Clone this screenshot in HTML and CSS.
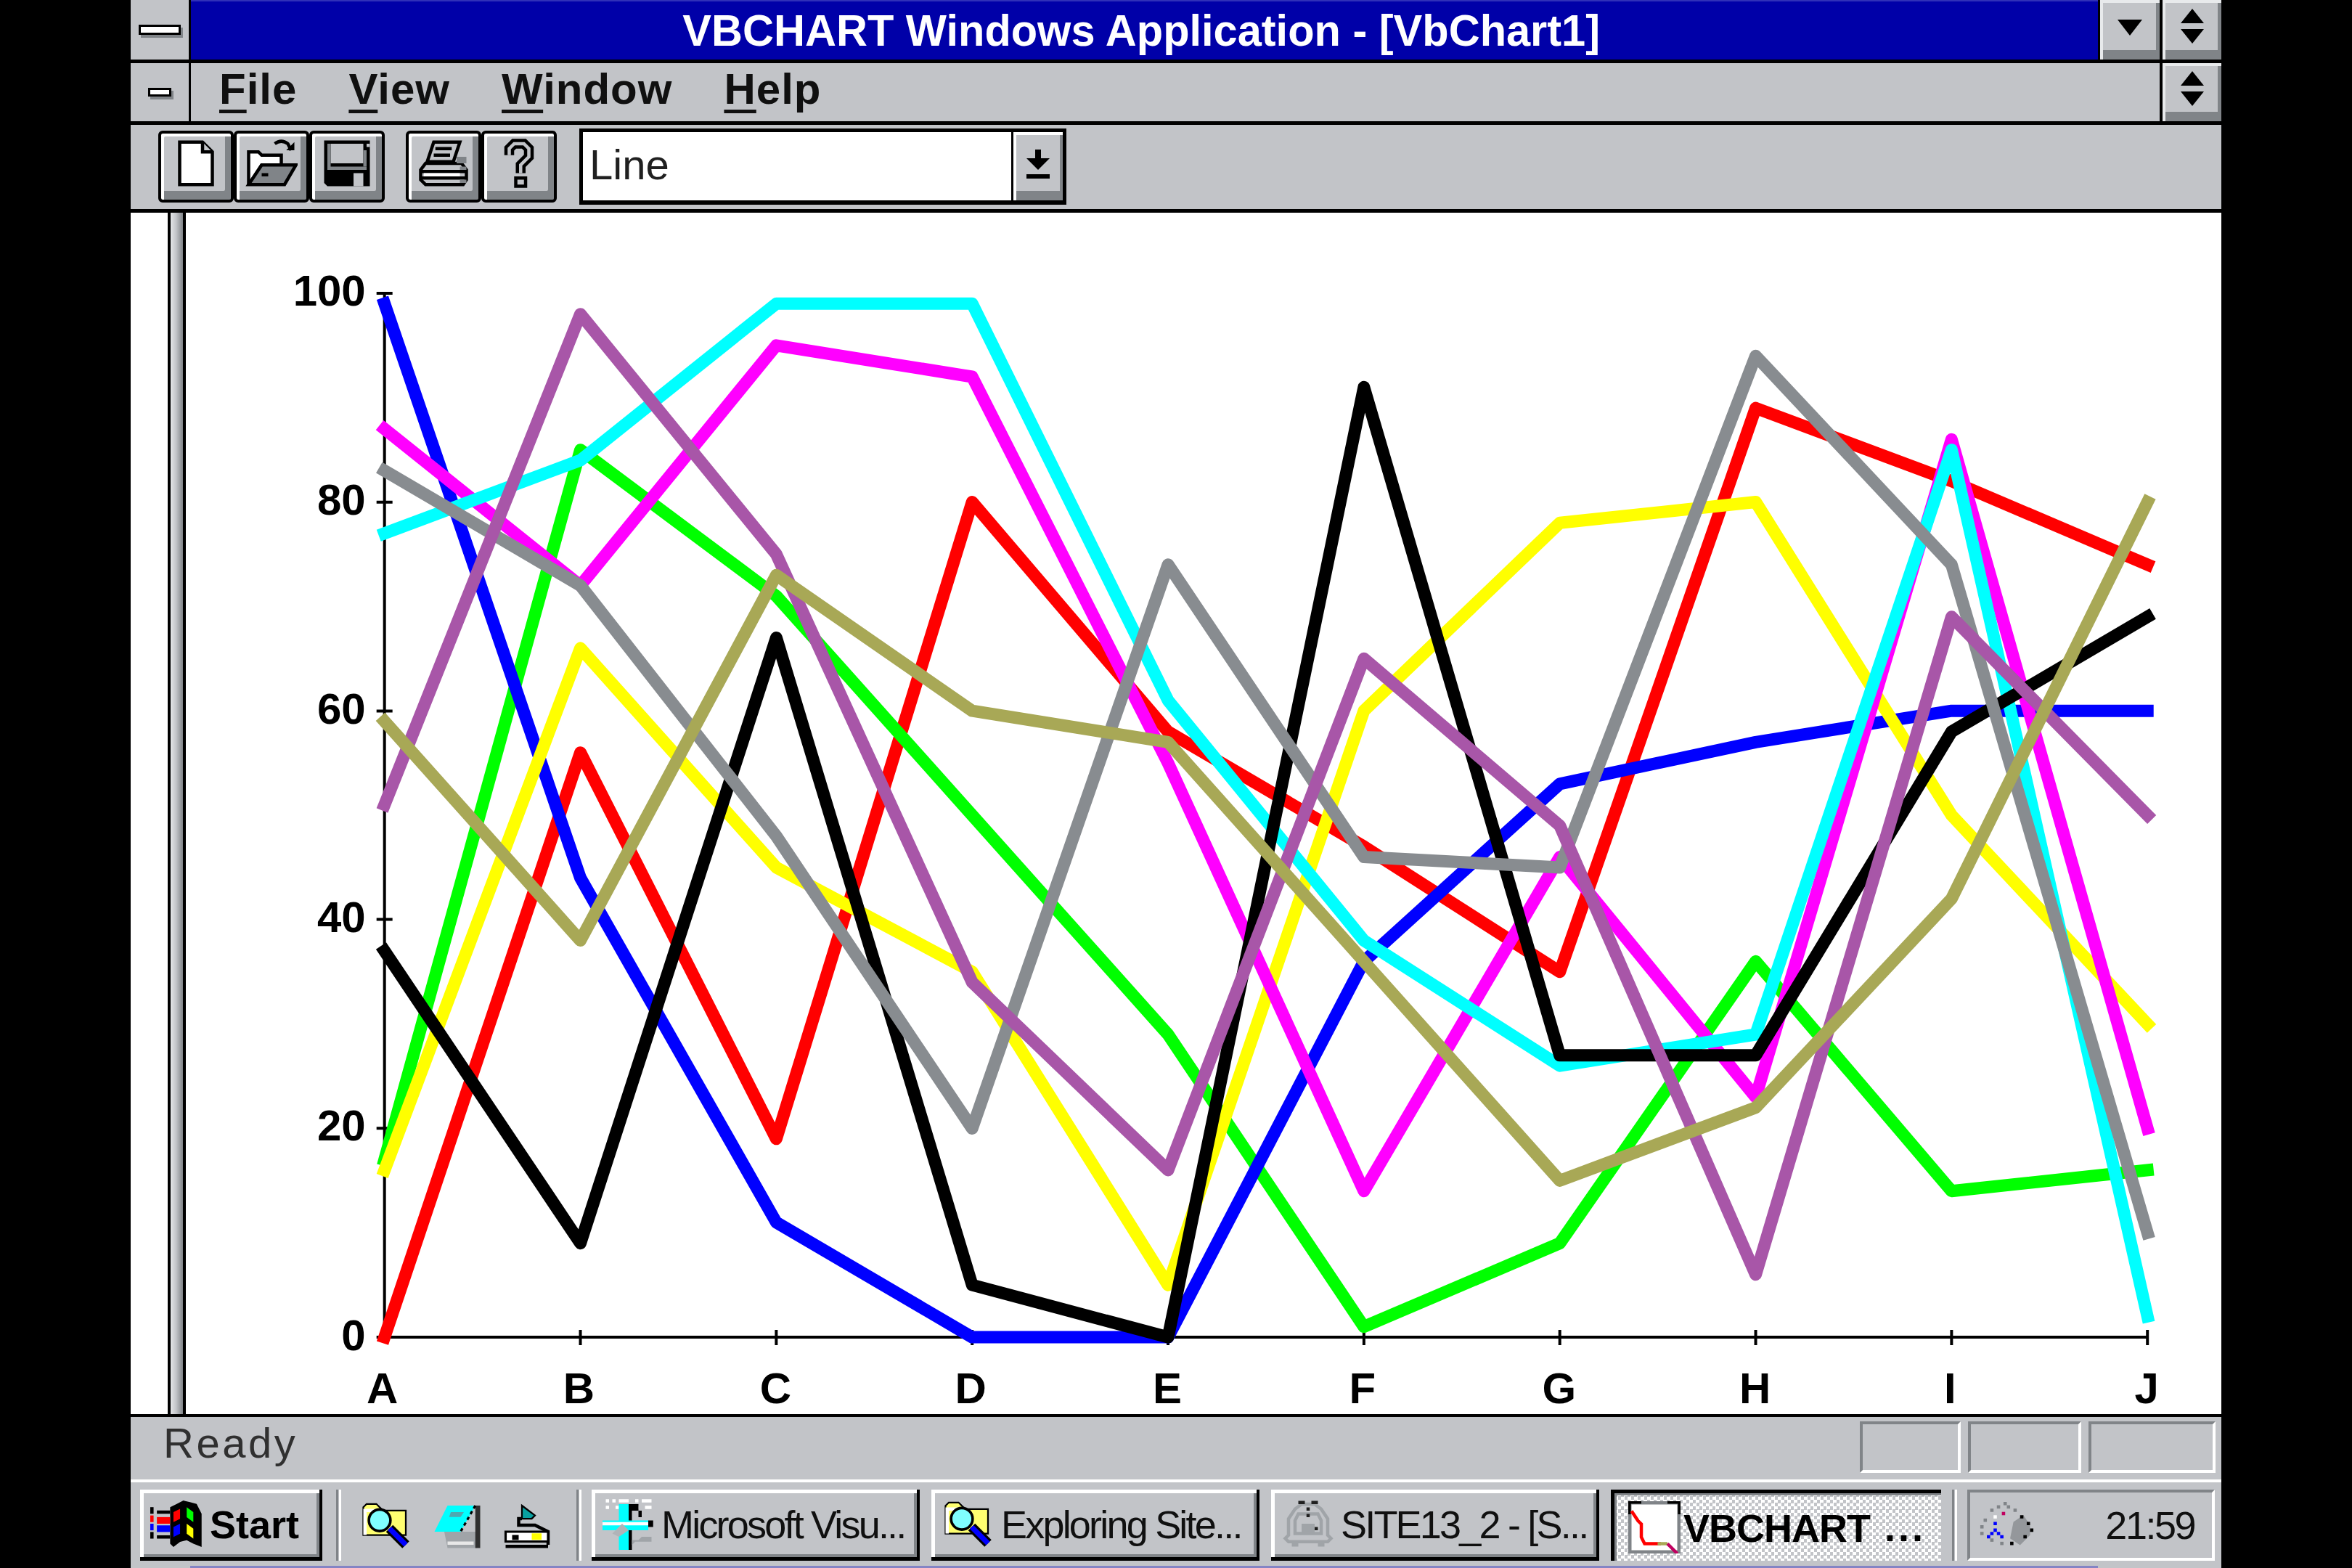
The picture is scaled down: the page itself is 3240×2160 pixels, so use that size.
FILE: index.html
```html
<!DOCTYPE html>
<html lang="en">
<head>
<meta charset="utf-8">
<title>VBCHART Windows Application</title>
<link rel="stylesheet" href="styles.css">
</head>
<body>
<div class="window">
  <header class="titlebar">
    <div class="sysbox"><span class="sysbar"></span></div>
    <div class="title"><span class="title-text">VBCHART Windows Application - [VbChart1]</span></div>
    <div class="capbtn capbtn-min">
      <svg class="arrow-one" viewBox="0 0 34 22"><path d="M0 0h34L17 22z"/></svg>
    </div>
    <div class="capbtn capbtn-max">
      <svg class="arrow" viewBox="0 0 36 48"><path d="M18 0l16 20H2zM2 28h32L18 48z"/></svg>
    </div>
  </header>

  <nav class="menubar">
    <div class="sysbox"><span class="sysbar sysbar-small"></span></div>
    <div class="menu">
      <span class="menu-item"><u>F</u>ile</span>
      <span class="menu-item"><u>V</u>iew</span>
      <span class="menu-item"><u>W</u>indow</span>
      <span class="menu-item"><u>H</u>elp</span>
    </div>
    <div class="capbtn capbtn-max capbtn-menu">
      <svg class="arrow" viewBox="0 0 36 48"><path d="M18 0l16 20H2zM2 28h32L18 48z"/></svg>
    </div>
  </nav>

  <div class="toolbar">
    <div class="tool-group">
      <div class="tool">
        <svg class="tool-icon" viewBox="0 0 16 16"><path d="M3 1.500h7l3 3v10H3z" fill="#fff" stroke="#000"/><path d="M10 1.500v3h3" fill="#c2c4c8" stroke="#000"/></svg>
      </div>
      <div class="tool">
        <svg class="tool-icon" viewBox="0 0 16 16"><path d="M9 2q2-1.500 4 0l1 2" fill="none" stroke="#000"/><path d="M12.500 4h2.500v-2.500z"/><path d="M1 4.500h3l1 1h6v3H5l-3.500 5.500H1z" fill="#fff" stroke="#000"/><path d="M5 8.500h10.500L12 14.500H1z" fill="#808488" stroke="#000"/><rect x="5" y="11" width="2" height="1"/></svg>
      </div>
      <div class="tool">
        <svg class="tool-icon" viewBox="0 0 16 16"><path d="M1 1h14v14H2l-1-1z"/><rect x="3" y="2" width="10" height="6" fill="#c2c4c8"/><rect x="2" y="2" width="1" height="8" fill="#808488"/><rect x="14" y="2" width="1" height="1" fill="#c2c4c8"/><rect x="13" y="4" width="1" height="5" fill="#808488"/><rect x="2" y="9" width="12" height="1" fill="#808488"/><rect x="10" y="11" width="3" height="4" fill="#c2c4c8"/></svg>
      </div>
    </div>
    <div class="tool-group tool-group-b">
      <div class="tool">
        <svg class="tool-icon" viewBox="0 0 16 16"><path d="M5 1.500h8l-2 6H3z" fill="#c2c4c8" stroke="#000"/><path d="M5.500 3.500h5M5 5.500h5" stroke="#000"/><path d="M2.500 8h11l1.500 2v3l-1 1.500H2.500L1 13v-3z" fill="#c2c4c8" stroke="#000"/><path d="M1 10.500h14M1 12.500h14" stroke="#000"/><rect x="2" y="11" width="11" height="1" fill="#fff"/><path d="M12 6h3v2h-3zM13 9h2v1h-2zM13 13h2v1h-2z" fill="#808488"/></svg>
      </div>
      <div class="tool">
        <svg class="tool-icon" viewBox="0 0 16 16"><path d="M5 5.500V3.500l1.500-1.500h3L11 3.500v2.500L8.500 8.500V11" fill="none" stroke="#000" stroke-width="3"/><path d="M5 5.500V3.500l1.500-1.500h3L11 3.500v2.500L8.500 8.500V11" fill="none" stroke="#c2c4c8"/><rect x="6.500" y="12" width="4" height="3.500" fill="#000"/><rect x="7.500" y="13" width="2" height="1.500" fill="#c2c4c8"/></svg>
      </div>
    </div>
    <div class="combo">
      <div class="combo-field">Line</div>
      <div class="combo-btn">
        <svg class="combo-arrow" viewBox="0 0 8 10"><path d="M3 0h2v3h3L4 7 0 3h3z"/><rect y="8.500" width="8" height="1.500"/></svg>
      </div>
    </div>
  </div>

  <main class="client">
    <div class="splitter"></div>
    <svg class="chart" viewBox="256 292 2804 1656">
      <g class="axis">
        <path d="M529 403V1842H2960"/>
        <path d="M518 403h22M518 691h22M518 979h22M518 1266h22M518 1554h22M518 1842h22"/>
        <path d="M799 1832v21M1069 1832v21M1339 1832v21M1609 1832v21M1879 1832v21M2149 1832v21M2419 1832v21M2689 1832v21M2959 1832v21"/>
      </g>
      <g transform="translate(529 1842) scale(270 -14.39)">
        <polyline class="series s-red" points="0,0 1,56 2,19 3,80 4,58 5,47 6,35 7,89 8,82 9,74"/>
        <polyline class="series s-green" points="0,17 1,85 2,71 3,50 4,29 5,1 6,9 7,36 8,14 9,16"/>
        <polyline class="series s-blue" points="0,99 1,44 2,11 3,0 4,0 5,36 6,53 7,57 8,60 9,60"/>
        <polyline class="series s-yellow" points="0,16 1,66 2,45 3,35 4,5 5,60 6,78 7,80 8,50 9,30"/>
        <polyline class="series s-magenta" points="0,87 1,72 2,95 3,92 4,55 5,14 6,46 7,23 8,86 9,20"/>
        <polyline class="series s-cyan" points="0,77 1,84 2,99 3,99 4,61 5,38 6,26 7,29 8,85 9,2"/>
        <polyline class="series s-black" points="0,37 1,9 2,67 3,5 4,0 5,91 6,27 7,27 8,58 9,69"/>
        <polyline class="series s-gray" points="0,83 1,72 2,48 3,20 4,74 5,46 6,45 7,94 8,74 9,10"/>
        <polyline class="series s-purple" points="0,51 1,98 2,75 3,34 4,16 5,65 6,49 7,6 8,69 9,50"/>
        <polyline class="series s-olive" points="0,59 1,38 2,73 3,60 4,57 5,36 6,15 7,22 8,42 9,80"/>
      </g>
      <g class="y-labels">
        <text x="503" y="420">100</text>
        <text x="503" y="708">80</text>
        <text x="503" y="996">60</text>
        <text x="503" y="1284">40</text>
        <text x="503" y="1571">20</text>
        <text x="503" y="1860">0</text>
      </g>
      <g class="x-labels">
        <text x="526" y="1933">A</text>
        <text x="797" y="1933">B</text>
        <text x="1068" y="1933">C</text>
        <text x="1337" y="1933">D</text>
        <text x="1608" y="1933">E</text>
        <text x="1877" y="1933">F</text>
        <text x="2148" y="1933">G</text>
        <text x="2418" y="1933">H</text>
        <text x="2687" y="1933">I</text>
        <text x="2958" y="1933">J</text>
      </g>
    </svg>
  </main>

  <div class="statusbar">
    <span class="status-text">Ready</span>
    <span class="panel panel-a"></span>
    <span class="panel panel-b"></span>
    <span class="panel panel-c"></span>
  </div>

  <footer class="taskbar">
    <div class="task start">
      <svg class="start-icon" viewBox="0 0 16 14"><path d="M6 2l2-1 2-1 2 .5 2 .5 1.500 3v10l-2.500-1-2-1-2 .5-2 1.500-1-1z"/><path d="M7 3.500l2-1v3l-2 1z" fill="#ff0000"/><path d="M11 2l2 1.500v3l-2-1.500z" fill="#00ff00"/><path d="M7 8l2-1v3l-2 1z" fill="#0000ff"/><path d="M11 7l2 1.500v3l-2-1.500z" fill="#ffff00"/><rect y="2" width="1" height="2"/><rect y="4.500" width="1" height="2" fill="#ff0000"/><rect y="7" width="1" height="2" fill="#0000ff"/><rect y="9.500" width="1" height="2"/><rect x="2" y="3" width="4" height="1"/><rect x="2" y="5" width="4" height="2" fill="#ff0000"/><rect x="2" y="7.500" width="4" height="2" fill="#0000ff"/><rect x="2" y="10.500" width="4" height="1"/></svg>
      <span class="start-text">Start</span>
    </div>
    <span class="task-sep task-sep-a"></span>
    <div class="quick">
      <svg class="icon" viewBox="0 0 16 16"><path d="M1 2.500l1-1h3l2 2h7V11H1z" fill="#ffff70" stroke="#000" stroke-width=".5"/><path d="M1 3h6v1H2v7H1z" fill="#fff"/><path d="M9 9l5 5" stroke="#000" stroke-width="3"/><path d="M9 9l5 5" stroke="#0000ff" stroke-width="1.600"/><circle cx="6" cy="6.500" r="3.300" fill="#80ffff" stroke="#000" stroke-width=".8"/></svg>
      <svg class="icon" viewBox="0 0 16 16"><path d="M4 10h10v5H5z" fill="#a0a4a8"/><path d="M13.500 2h1.500v13h-1.500z" fill="#303030"/><rect x="5" y="13" width="8" height="1" fill="#e8e8e8"/><path d="M5 2h8.500L9 10H1z" fill="#00ffff"/><path d="M6 4h4L9 5.500H5.500z" fill="#50a8b0"/><path d="M13.500 2L9 10" stroke="#000" stroke-width=".7" stroke-dasharray="1 1"/></svg>
      <svg class="icon" viewBox="0 0 16 16"><path d="M6 2l4 3-1 1H6z" fill="#08a0a0" stroke="#000" stroke-width=".5"/><path d="M6 6h-1v2h5l4 2v4" fill="none" stroke="#000"/><path d="M1 10h13v3H1z" fill="#fff" stroke="#000" stroke-width=".7"/><rect x="9" y="10.500" width="3" height="2" fill="#ffff00"/><rect x="3" y="11" width="2" height="1.500" fill="#000"/><rect x="1" y="14" width="13" height="1"/></svg>
    </div>
    <span class="task-sep task-sep-b"></span>
    <div class="task task-btn">
      <svg class="icon" viewBox="0 0 16 16"><path d="M1 1h1M3 1h1M5 1h3M10 1h1M12 1h3M1 3h1M4 3h1M6 3h2M10 3h1M13 3h2" stroke="#fff"/><path d="M8 2h1v14H8zM9 2h2v2h1v2h-1V4H9zM14 7h1.500v2H14z"/><path d="M5 2h3v14H5V10H0V7h5z" fill="#00ffff"/><path d="M8 7h6v3H8z" fill="#00ffff"/><path d="M0 8h14" stroke="#fff"/><path d="M3 11l3-3 2 2-3 2z" fill="#b0b4b8"/><path d="M9 13h2l1-1h3v1.500H10l-1 1z" fill="#a0a4a8"/></svg>
      <span class="task-text">Microsoft Visu...</span>
    </div>
    <div class="task task-btn">
      <svg class="icon" viewBox="0 0 16 16"><path d="M1 2.500l1-1h3l2 2h7V11H1z" fill="#ffff70" stroke="#000" stroke-width=".5"/><path d="M1 3h6v1H2v7H1z" fill="#fff"/><path d="M9 9l5 5" stroke="#000" stroke-width="3"/><path d="M9 9l5 5" stroke="#0000ff" stroke-width="1.600"/><circle cx="6" cy="6.500" r="3.300" fill="#80ffff" stroke="#000" stroke-width=".8"/></svg>
      <span class="task-text">Exploring Site...</span>
    </div>
    <div class="task task-btn">
      <svg class="icon" viewBox="0 0 16 16"><path d="M4 3.500l2-1.500h4l2 1.500 2 3v5l1 1-1 1H2l-1-1 1-1v-5z" fill="none" stroke="#a0a4a8"/><path d="M5 5h6l1 2v4H4V7z" fill="none" stroke="#a0a4a8"/><rect x="6" y="8" width="4" height="3" fill="#a0a4a8"/><path d="M3 14h2v1H3zM11 14h2v1h-2z" fill="#a0a4a8"/><path d="M5 1h2v1H5zM9 1h2v1H9zM7.500 3h1v1h-1zM7.500 5h1v1h-1zM10 9h1v1h-1z" fill="#202020"/></svg>
      <span class="task-text">SITE13_2 - [S...</span>
    </div>
    <div class="task task-active">
      <svg class="icon" viewBox="0 0 16 16"><rect x=".5" y=".5" width="15" height="15" fill="#fff" stroke="#808488"/><path d="M0 0h4v.8H.8V4H0zM16 0v4h-.8V.8H12V0z"/><path d="M1 3l2 3 1 1v4l1 2h3l2 0" fill="none" stroke="#ff0000" stroke-width="1"/><path d="M9 13h3" stroke="#a8a856"/><path d="M12 13l3 3" stroke="#c00060"/></svg>
      <span class="start-text">VBCHART</span>
      <span class="active-dots">...</span>
    </div>
    <span class="task-sep task-sep-c"></span>
    <div class="tray">
      <svg class="icon tray-icon" viewBox="0 0 16 14"><g fill="#808488"><rect x="7" y="0" width="1" height="1"/><rect x="5" y="1" width="1" height="1"/><rect x="8" y="1" width="1" height="1"/><rect x="3" y="2" width="1" height="1"/><rect x="10" y="2" width="1" height="1"/><rect x="1" y="5" width="1" height="1"/><rect x="0" y="7" width="1" height="1"/><rect x="0" y="9" width="1" height="1"/><rect x="3" y="11" width="1" height="1"/><rect x="6" y="12" width="1" height="1"/><path d="M10 6l3-2 2 3v3l-3 3-3-2z" opacity=".7"/></g><path d="M12 4h1v1h-1zM14 6h1v1h-1zM15 8h1v1h-1zM13 10h1v1h-1zM9 12h1v1H9z" fill="#000"/><rect x="6.500" y="3" width="1" height="1" fill="#c00060"/><rect x="4" y="4" width="1" height="1" fill="#fff"/><path d="M4 6h1v1H4zM4 8h1v1H4zM3 9h1v1H3zM5 9h1v1H5zM2 10h1v1H2zM6 10h1v1H6z" fill="#0000ff"/></svg>
      <span class="clock">21:59</span>
    </div>
  </footer>
</div>
</body>
</html>
```

FILE: styles.css
```css
* { box-sizing: border-box; }
html, body { margin: 0; height: 100%; }
body {
  background: #000;
  display: flex;
  justify-content: center;
  font-family: "Liberation Sans", Arial, sans-serif;
  color: #000;
}
.window {
  width: 2880px;
  height: 2160px;
  display: flex;
  flex-direction: column;
  background: #c2c4c8;
  overflow: hidden;
}

/* title bar */
.titlebar {
  flex: 0 0 86px;
  display: flex;
  border-bottom: 5px solid #000;
}
.sysbox {
  flex: 0 0 83px;
  display: flex;
  align-items: center;
  justify-content: center;
  background: #c2c4c8;
  border-right: 3px solid #000;
}
.sysbar {
  width: 58px;
  height: 14px;
  background: #fff;
  border: 3px solid #000;
  box-shadow: 3px 4px 0 #808488;
}
.sysbar-small { width: 32px; height: 12px; }
.title {
  flex: 1;
  background: #0000a8;
  border-top: 2px solid #3030b8;
  display: flex;
  justify-content: center;
  align-items: center;
  overflow: hidden;
}
.title-text {
  display: inline-block;
  color: #fff;
  font-weight: 700;
  font-size: 62px;
  line-height: 80px;
  white-space: nowrap;
  transform: scaleX(.96);
  position: relative;
  left: -4px;
}
.capbtn {
  display: flex;
  align-items: center;
  justify-content: center;
  background: #c2c4c8;
  box-shadow: inset 4px 4px 0 #e8eaec, inset -5px -13px 0 #808488;
}
.capbtn-min { flex: 0 0 85px; border-left: 3px solid #000; }
.capbtn-max { flex: 0 0 85px; border-left: 4px solid #000; }
.arrow { display: block; width: 36px; height: 48px; margin-bottom: 10px; fill: #000; }
.arrow-one { display: block; width: 34px; height: 22px; margin-bottom: 6px; fill: #000; }

/* menu bar */
.menubar {
  flex: 0 0 85px;
  display: flex;
  border-bottom: 5px solid #000;
}
.menu {
  flex: 1;
  display: flex;
  align-items: center;
  gap: 71px;
  padding: 0 0 8px 39px;
  font-weight: 700;
  font-size: 60px;
  line-height: 70px;
  letter-spacing: 1px;
}
.menu-item { white-space: nowrap; color: #101010; }
.menu-item u { text-decoration-thickness: 5px; text-underline-offset: 8px; }

/* toolbar */
.toolbar {
  flex: 0 0 121px;
  display: flex;
  align-items: center;
  padding: 0 0 2px 38px;
  border-bottom: 5px solid #000;
}
.tool-group { display: flex; margin-right: 29px; }
.tool-group-b { margin-right: 31px; }
.tool {
  width: 104px;
  height: 99px;
  background: #c2c4c8;
  border: 4px solid #000;
  border-radius: 6px;
  box-shadow: inset 4px 4px 0 #fff, inset -8px -12px 0 #808488;
  display: flex;
  align-items: center;
  justify-content: center;
  padding-bottom: 8px;
}
.tool-icon { display: block; width: 72px; height: 72px; }
.combo {
  width: 671px;
  height: 105px;
  display: flex;
  background: #fff;
  border: 5px solid #000;
  border-bottom-width: 6px;
}
.combo-field {
  flex: 1;
  font-size: 58px;
  line-height: 90px;
  padding-left: 9px;
  color: #202020;
}
.combo-btn {
  flex: 0 0 71px;
  display: flex;
  align-items: center;
  justify-content: center;
  background: #c2c4c8;
  border-left: 3px solid #000;
  box-shadow: inset 4px 4px 0 #fff, inset -4px -13px 0 #808488;
}
.combo-arrow { display: block; width: 32px; height: 42px; margin-bottom: 6px; }

/* client area */
.client {
  flex: 1;
  min-height: 0;
  display: flex;
  background: #fff;
  padding-left: 51px;
}
.splitter {
  flex: 0 0 25px;
  border-left: 4px solid #000;
  border-right: 4px solid #000;
  background: linear-gradient(to right, #e4e6e8, #c2c4c8 45%, #808488);
}
.chart { flex: 1; display: block; height: 100%; min-width: 0; }
.axis path { fill: none; stroke: #000; stroke-width: 4; }
.series {
  fill: none;
  stroke-width: 17;
  stroke-linecap: square;
  stroke-linejoin: round;
  vector-effect: non-scaling-stroke;
}
.s-red { stroke: #ff0000; }
.s-green { stroke: #00ff00; }
.s-blue { stroke: #0000ff; }
.s-yellow { stroke: #ffff00; }
.s-magenta { stroke: #ff00ff; }
.s-cyan { stroke: #00ffff; }
.s-black { stroke: #000; }
.s-gray { stroke: #888c90; }
.s-purple { stroke: #a856a8; }
.s-olive { stroke: #a8a856; }
.y-labels text, .x-labels text {
  font-family: "Liberation Sans", Arial, sans-serif;
  font-weight: 700;
  font-size: 60px;
  fill: #000;
}
.y-labels text { text-anchor: end; }
.x-labels text { text-anchor: middle; }

/* status bar */
.statusbar {
  flex: 0 0 90px;
  display: flex;
  align-items: stretch;
  gap: 10px;
  border-top: 4px solid #000;
  padding: 6px 8px 9px 45px;
}
.status-text {
  margin-right: auto;
  font-size: 58px;
  letter-spacing: 3.500px;
  line-height: 60px;
  color: #303030;
}
.panel {
  border: 4px solid #808488;
  border-right-color: #fff;
  border-bottom-color: #fff;
}
.panel-a { flex: 0 0 139px; }
.panel-b { flex: 0 0 156px; }
.panel-c { flex: 0 0 175px; }

/* task bar */
.taskbar {
  flex: 0 0 122px;
  position: relative;
  display: flex;
  align-items: stretch;
  gap: 16px;
  border-top: 4px solid #fff;
  padding: 10px 10px 10px 13px;
}
.taskbar::after {
  content: "";
  position: absolute;
  left: 82px;
  right: 170px;
  bottom: 0;
  height: 3px;
  background: #8484c4;
}
.task {
  display: flex;
  align-items: center;
  gap: 11px;
  padding-left: 15px;
  background: #c2c4c8;
  border-right: 4px solid #000;
  border-bottom: 5px solid #000;
  box-shadow: inset 5px 5px 0 #fff, inset -4px -4px 0 #808488;
  white-space: nowrap;
  overflow: hidden;
}
.start { flex: 0 0 251px; gap: 9px; padding-left: 14px; margin-right: 3px; }
.start-icon { display: block; width: 73px; height: 64px; flex: none; }
.start-text { font-weight: 700; font-size: 54px; color: #000; padding-top: 2px; }
.task-sep {
  flex: 0 0 7px;
  border-left: 3px solid #808488;
  border-right: 3px solid #fff;
}
.task-sep-a { margin-right: 10px; }
.task-sep-b { margin-left: 14px; margin-right: -2px; }
.task-sep-c { margin-left: -1px; margin-right: -2px; }
.quick { display: flex; align-items: center; gap: 26px; }
.icon { display: block; flex: none; width: 72px; height: 72px; }
.task-btn { flex: 0 0 452px; gap: 9px; }
.task-text { font-size: 54px; letter-spacing: -2.800px; color: #101010; padding-top: 2px; }
.task-active {
  flex: 0 0 455px;
  gap: 4px;
  padding-left: 19px;
  background-color: #e4e4e6;
  background-image: repeating-conic-gradient(#fff 0 25%, #c2c4c8 0 50%);
  background-size: 9px 9px;
  border-right: 0;
  border-bottom: 0;
  border-top: 5px solid #000;
  border-left: 5px solid #000;
  box-shadow: inset 3px 3px 0 #808488;
}
.task-active .start-text { letter-spacing: -1px; }
.active-dots { font-weight: 700; font-size: 54px; margin-left: 16px; letter-spacing: 4px; }
.tray {
  flex: 0 0 341px;
  display: flex;
  align-items: center;
  justify-content: space-between;
  padding: 0 24px 0 13px;
  border: 4px solid #808488;
  border-right-color: #fff;
  border-bottom-color: #fff;
}
.tray-icon { width: 75px; height: 64px; }
.clock { font-size: 54px; letter-spacing: -2.500px; color: #101010; }
```
